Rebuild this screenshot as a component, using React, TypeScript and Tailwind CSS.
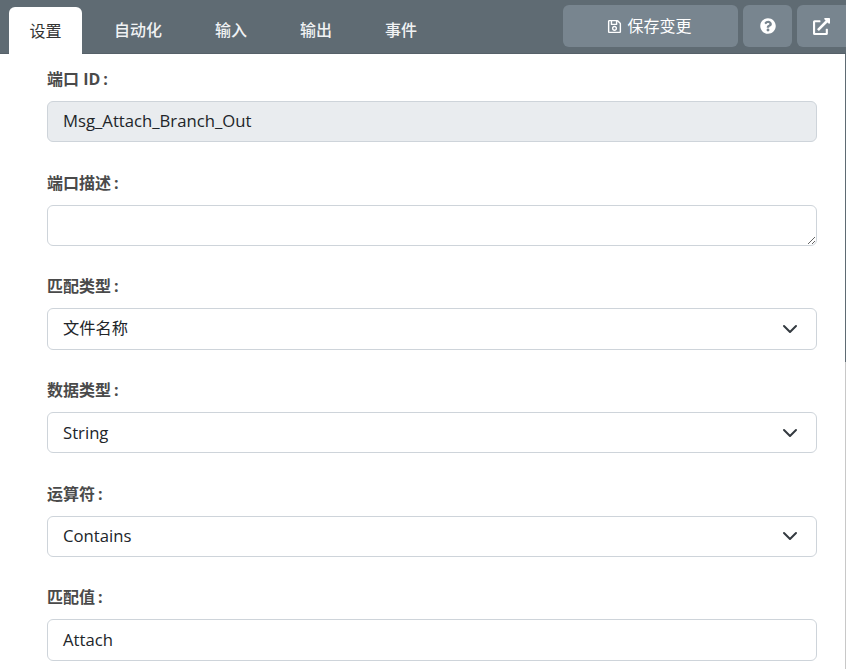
import { FaRegSave, FaQuestionCircle, FaExternalLinkAlt } from "react-icons/fa";

const fontStack = "font-['Open_Sans','Noto_Sans_CJK_SC',sans-serif]";

const tabs = ["设置", "自动化", "输入", "输出", "事件"];

const boxClass =
  "flex h-[41.4px] items-center rounded-md border border-[#ced4da] pl-[15px] text-[16.7px] text-[#212529]";

const SelectBox = ({ value, cjk }: { value: string; cjk?: boolean }) => (
  <div className={`${boxClass} justify-between bg-white pr-[18px]`}>
    <span className={cjk ? "pb-px text-[16.25px]" : "pb-px"}>{value}</span>
    <svg viewBox="0 0 16 16" className="h-4 w-4" fill="none" stroke="#343a40" strokeWidth="2" strokeLinecap="round" strokeLinejoin="round">
      <path d="m2 5 6 6 6-6" />
    </svg>
  </div>
);

const Field = ({ label, children }: { label: string; children: React.ReactNode }) => (
  <div className="mb-[28.3px]">
    <div className="mb-[10px] h-[24px] text-base leading-[24px] font-bold text-[#4a4a4a]">
      {label}
      <span className="ml-[3px]">:</span>
    </div>
    {children}
  </div>
);

export default function App() {
  return (
    <div className={`flex h-[669px] w-[846px] flex-col overflow-hidden bg-white ${fontStack}`}>
      <div className="flex h-[54px] shrink-0 items-end justify-between border-b border-[#566169] bg-[#5f6b73] pl-[9px]">
        <div className="flex">
          {tabs.map((tab, i) => (
            <div
              key={tab}
              className={
                i === 0
                  ? "-mb-px mr-[5.5px] flex h-[47px] w-[73px] items-center justify-center rounded-t-md bg-white text-base text-[#333]"
                  : "flex h-[46px] items-center justify-center px-[26.5px] text-base font-medium text-[#f0f2f3]"
              }
            >
              {tab}
            </div>
          ))}
        </div>
        <div className="mb-[6px] flex gap-[5px]">
          <div className="flex h-[42px] w-[175px] items-center justify-center gap-[5px] rounded-md bg-[#78858f] pr-[2px] text-base text-white">
            <FaRegSave className="h-[15px] w-[15px]" />
            保存变更
          </div>
          <div className="flex h-[42px] w-[49px] items-center justify-center rounded-md bg-[#78858f] text-white">
            <FaQuestionCircle className="h-4 w-4" />
          </div>
          <div className="flex h-[42px] w-[49px] items-center justify-center rounded-l-md bg-[#78858f] text-white">
            <FaExternalLinkAlt className="h-[17px] w-[17px]" />
          </div>
        </div>
      </div>

      <div className="flex flex-1 overflow-hidden">
        <div className="flex-1 overflow-hidden pt-[12.9px] pl-[47px] pr-[28px]">
          <Field label="端口 ID">
            <div className={`${boxClass} bg-[#e9ecef] pb-[2px]`}>Msg_Attach_Branch_Out</div>
          </Field>
          <Field label="端口描述">
            <textarea
              readOnly
              className="block h-[41.4px] w-full rounded-md border border-[#ced4da] bg-white px-[15px] py-[6px] text-base"
            />
          </Field>
          <Field label="匹配类型">
            <SelectBox value="文件名称" cjk />
          </Field>
          <Field label="数据类型">
            <SelectBox value="String" />
          </Field>
          <Field label="运算符">
            <SelectBox value="Contains" />
          </Field>
          <Field label="匹配值">
            <div className={`${boxClass} bg-white pb-px`}>Attach</div>
          </Field>
        </div>
        {/* thin scrollbar on the right edge */}
        <div className="w-px shrink-0 bg-[#c8c8c8]">
          <div className="h-[308px] bg-[#5f6b73]" />
        </div>
      </div>
    </div>
  );
}
